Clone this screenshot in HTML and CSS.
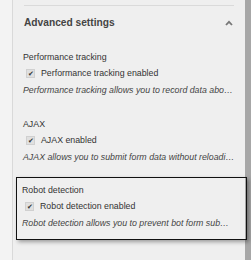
FILE: index.html
```html
<!DOCTYPE html>
<html lang="en">
<head>
	<meta charset="UTF-8">
	<title>Advanced settings</title>
	<link rel="stylesheet" href="styles.css">
</head>
<body>
	<div class="page">
		<div class="gutter"></div>
		<div class="panel">
			<div class="head">
				<span class="head-title">Advanced settings</span>
				<svg class="caret" width="8" height="6" viewBox="0 0 8 6"><polyline points="1,5 4,1.8 7,5" fill="none" stroke="#777" stroke-width="1.8"/></svg>
			</div>

			<div class="group">
				<div class="title">Performance tracking</div>
				<div class="check"><span class="box">&#10004;</span>Performance tracking enabled</div>
				<div class="desc">Performance tracking allows you to record data abo…</div>
			</div>

			<div class="group">
				<div class="title">AJAX</div>
				<div class="check"><span class="box">&#10004;</span>AJAX enabled</div>
				<div class="desc">AJAX allows you to submit form data without reloadi…</div>
			</div>

			<div class="group active">
				<div class="title">Robot detection</div>
				<div class="check"><span class="box">&#10004;</span>Robot detection enabled</div>
				<div class="desc">Robot detection allows you to prevent bot form sub…</div>
			</div>
		</div>
		<div class="bar"></div>
	</div>
</body>
</html>
```
FILE: styles.css
```css
body{margin: 0;padding: 0;font: 8.8px/16px "Liberation Sans", Arial, sans-serif;color: #333;background: #efefef;}
.page{display: flex;height: 260px;}
.gutter{width: 12px;background: #f3f3f3;border-right: 1px solid #d9d9d9;}
.panel{flex: 1;padding-top: 5px;min-width: 0;}
.bar{width: 6px;background: #a7a7a7;}

.head{margin: 0 11px;border-top: 1px solid #dadada;padding: 9px 0 18px;display: flex;align-items: center;justify-content: space-between;}
.head-title{font-size: 10.2px;font-weight: bold;color: #444;}
.caret{margin-right: 1px;}

.group{margin-left: 10px;margin-right: 9px;padding-bottom: 18px;}
.title{height: 16px;}
.check{height: 17px;line-height: 17px;display: flex;align-items: center;padding-left: 3px;}
.box{width: 9px;height: 9px;box-sizing: border-box;border: 1px solid #d0d0d0;background: #e0e0e0;color: #333;font-size: 7px;line-height: 7px;text-align: center;margin-right: 6px;}
.desc{font-style: italic;color: #444;white-space: nowrap;}

.group.active{position: relative;margin: -6px -2px 0 3px;padding: 4px 0 8px 5px;border: 1px solid #111;box-shadow: 2px 2px 4px rgba(0,0,0,.35);}
.check, .title{white-space: nowrap;}
```
